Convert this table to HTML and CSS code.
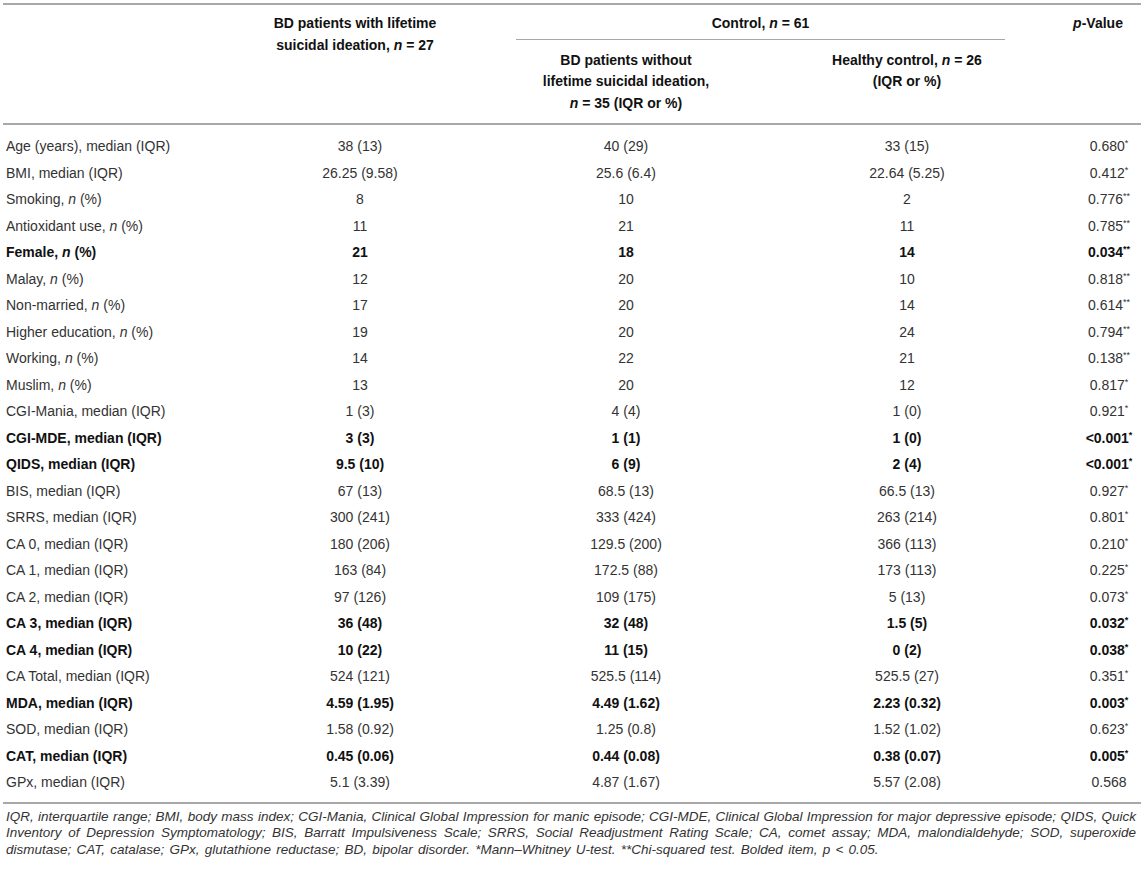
FILE: index.html
```html
<!DOCTYPE html>
<html lang="en">
<head>
<meta charset="utf-8">
<title>Table</title>
<link rel="stylesheet" href="styles.css">
</head>
<body>
<div class="page">
<table class="data">
  <colgroup>
    <col class="w0"><col class="w1"><col class="w2"><col class="w3"><col class="w4">
  </colgroup>
  <thead>
    <tr>
      <th rowspan="2" class="h-label"></th>
      <th rowspan="2" class="h-top h1">BD patients with lifetime<br>suicidal ideation, <i>n</i> = 27</th>
      <th colspan="2" class="h-ctrl"><div class="ctrl-line">Control, <i>n</i> = 61</div></th>
      <th rowspan="2" class="h-top h4"><i>p</i>-Value</th>
    </tr>
    <tr>
      <th class="h-sub h2">BD patients without<br>lifetime suicidal ideation,<br><i>n</i> = 35 (IQR or %)</th>
      <th class="h-sub h3">Healthy control, <i>n</i> = 26<br>(IQR or %)</th>
    </tr>
  </thead>
  <tbody>
    <tr class="first"><td>Age (years), median (IQR)</td><td>38 (13)</td><td>40 (29)</td><td>33 (15)</td><td class="p">0.680<sup>*</sup></td></tr>
    <tr><td>BMI, median (IQR)</td><td>26.25 (9.58)</td><td>25.6 (6.4)</td><td>22.64 (5.25)</td><td class="p">0.412<sup>*</sup></td></tr>
    <tr><td>Smoking, <i>n</i> (%)</td><td>8</td><td>10</td><td>2</td><td class="p">0.776<sup>**</sup></td></tr>
    <tr><td>Antioxidant use, <i>n</i> (%)</td><td>11</td><td>21</td><td>11</td><td class="p">0.785<sup>**</sup></td></tr>
    <tr class="b"><td>Female, <i>n</i> (%)</td><td>21</td><td>18</td><td>14</td><td class="p">0.034<sup>**</sup></td></tr>
    <tr><td>Malay, <i>n</i> (%)</td><td>12</td><td>20</td><td>10</td><td class="p">0.818<sup>**</sup></td></tr>
    <tr><td>Non-married, <i>n</i> (%)</td><td>17</td><td>20</td><td>14</td><td class="p">0.614<sup>**</sup></td></tr>
    <tr><td>Higher education, <i>n</i> (%)</td><td>19</td><td>20</td><td>24</td><td class="p">0.794<sup>**</sup></td></tr>
    <tr><td>Working, <i>n</i> (%)</td><td>14</td><td>22</td><td>21</td><td class="p">0.138<sup>**</sup></td></tr>
    <tr><td>Muslim, <i>n</i> (%)</td><td>13</td><td>20</td><td>12</td><td class="p">0.817<sup>*</sup></td></tr>
    <tr><td>CGI-Mania, median (IQR)</td><td>1 (3)</td><td>4 (4)</td><td>1 (0)</td><td class="p">0.921<sup>*</sup></td></tr>
    <tr class="b"><td>CGI-MDE, median (IQR)</td><td>3 (3)</td><td>1 (1)</td><td>1 (0)</td><td class="p">&lt;0.001<sup>*</sup></td></tr>
    <tr class="b"><td>QIDS, median (IQR)</td><td>9.5 (10)</td><td>6 (9)</td><td>2 (4)</td><td class="p">&lt;0.001<sup>*</sup></td></tr>
    <tr><td>BIS, median (IQR)</td><td>67 (13)</td><td>68.5 (13)</td><td>66.5 (13)</td><td class="p">0.927<sup>*</sup></td></tr>
    <tr><td>SRRS, median (IQR)</td><td>300 (241)</td><td>333 (424)</td><td>263 (214)</td><td class="p">0.801<sup>*</sup></td></tr>
    <tr><td>CA 0, median (IQR)</td><td>180 (206)</td><td>129.5 (200)</td><td>366 (113)</td><td class="p">0.210<sup>*</sup></td></tr>
    <tr><td>CA 1, median (IQR)</td><td>163 (84)</td><td>172.5 (88)</td><td>173 (113)</td><td class="p">0.225<sup>*</sup></td></tr>
    <tr><td>CA 2, median (IQR)</td><td>97 (126)</td><td>109 (175)</td><td>5 (13)</td><td class="p">0.073<sup>*</sup></td></tr>
    <tr class="b"><td>CA 3, median (IQR)</td><td>36 (48)</td><td>32 (48)</td><td>1.5 (5)</td><td class="p">0.032<sup>*</sup></td></tr>
    <tr class="b"><td>CA 4, median (IQR)</td><td>10 (22)</td><td>11 (15)</td><td>0 (2)</td><td class="p">0.038<sup>*</sup></td></tr>
    <tr><td>CA Total, median (IQR)</td><td>524 (121)</td><td>525.5 (114)</td><td>525.5 (27)</td><td class="p">0.351<sup>*</sup></td></tr>
    <tr class="b"><td>MDA, median (IQR)</td><td>4.59 (1.95)</td><td>4.49 (1.62)</td><td>2.23 (0.32)</td><td class="p">0.003<sup>*</sup></td></tr>
    <tr><td>SOD, median (IQR)</td><td>1.58 (0.92)</td><td>1.25 (0.8)</td><td>1.52 (1.02)</td><td class="p">0.623<sup>*</sup></td></tr>
    <tr class="b"><td>CAT, median (IQR)</td><td>0.45 (0.06)</td><td>0.44 (0.08)</td><td>0.38 (0.07)</td><td class="p">0.005<sup>*</sup></td></tr>
    <tr class="last"><td>GPx, median (IQR)</td><td>5.1 (3.39)</td><td>4.87 (1.67)</td><td>5.57 (2.08)</td><td class="p">0.568</td></tr>
  </tbody>
</table>
<div class="note">
  <span class="ln just">IQR, interquartile range; BMI, body mass index; CGI-Mania, Clinical Global Impression for manic episode; CGI-MDE, Clinical Global Impression for major depressive episode; QIDS, Quick</span>
  <span class="ln just">Inventory of Depression Symptomatology; BIS, Barratt Impulsiveness Scale; SRRS, Social Readjustment Rating Scale; CA, comet assay; MDA, malondialdehyde; SOD, superoxide</span>
  <span class="ln last-line">dismutase; CAT, catalase; GPx, glutathione reductase; BD, bipolar disorder. *Mann–Whitney U-test. **Chi-squared test. Bolded item, p &lt; 0.05.</span>
</div>
</div>
</body>
</html>
```

FILE: styles.css
```css
html, body {
  margin: 0;
  padding: 0;
  background: #ffffff;
}

.page {
  padding: 3px 5px 0 3px;
  font-family: "Liberation Sans", Arial, Helvetica, sans-serif;
  color: #333333;
}

.data {
  width: 1138px;
  border-collapse: collapse;
  table-layout: fixed;
  font-size: 14px;
  border-top: 2px solid #a8a8a8;
  border-bottom: 2px solid #a8a8a8;
}

.w0 { width: 247px; }
.w1 { width: 220px; }
.w2 { width: 312px; }
.w3 { width: 250px; }
.w4 { width: 109px; }

.data th {
  font-weight: bold;
  color: #111111;
  line-height: 21.5px;
  text-align: center;
  padding: 0;
}

.data thead tr:last-child th,
.data thead .h-label,
.data thead .h-top {
  border-bottom: 2px solid #a8a8a8;
}

.h-top {
  vertical-align: top;
  padding-top: 8px !important;
}

.h1 { padding-right: 10px !important; }
.h4 { padding-left: 23px !important; }

.h-ctrl {
  vertical-align: top;
  padding-top: 8px !important;
}

.ctrl-line {
  margin: 0 27px 0 46px;
  padding-bottom: 4px;
  border-bottom: 1.5px solid #a8a8a8;
}

.h-sub {
  vertical-align: top;
  padding-top: 10px !important;
  padding-bottom: 9px !important;
}

.data td {
  line-height: 26.5px;
  padding: 0;
  text-align: center;
  white-space: nowrap;
}

.data td:first-child {
  text-align: left;
  padding-left: 3px;
}

.data td.p {
  padding-left: 45px;
}

.data tr.first td { padding-top: 8px; }
.data tr.last td { padding-bottom: 6px; }

.data tr.b td {
  font-weight: bold;
  color: #111111;
}

.data sup {
  font-size: 9px;
  line-height: 0;
  vertical-align: 5px;
}

.note {
  padding: 5px 5px 0 3px;
  font-size: 13.5px;
  font-style: italic;
  line-height: 16.5px;
  color: #333333;
}

.ln {
  display: block;
  white-space: nowrap;
}

.ln.just {
  text-align: justify;
  text-align-last: justify;
  white-space: normal;
  word-spacing: -2px;
}

.ln.last-line {
  word-spacing: 1.5px;
}
```
